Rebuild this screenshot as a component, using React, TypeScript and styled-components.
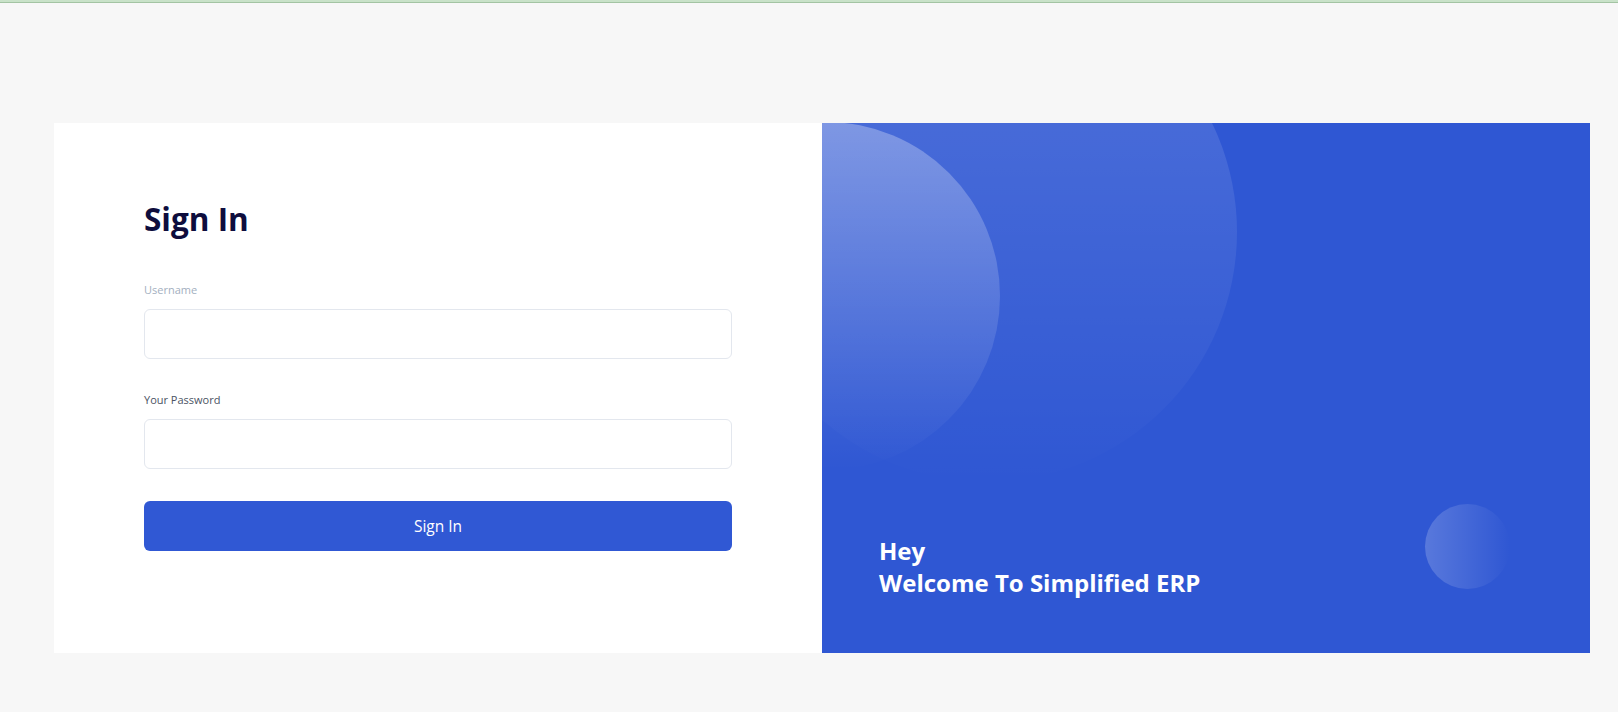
import React from "react";
import styled, { createGlobalStyle } from "styled-components";

const GlobalStyle = createGlobalStyle`
  * { box-sizing: border-box; }
  html, body { margin: 0; padding: 0; }
  body {
    background: #f7f7f7;
    font-family: "Open Sans", "Noto Sans", "Liberation Sans", sans-serif;
    -webkit-font-smoothing: antialiased;
  }
`;

const TopLine = styled.div`
  height: 3px;
  background: #c9e2c9;
  border-bottom: 1px solid #a3c4a3;
`;

const Page = styled.main`
  padding: 120px 28px 59px 54px;
`;

const Card = styled.section`
  display: grid;
  grid-template-columns: 768px 768px;
  height: 530px;
`;

const FormPanel = styled.div`
  background: #ffffff;
  padding: 77px 90px 0 90px;
  display: flex;
  flex-direction: column;
`;

const Title = styled.h1`
  margin: 0 0 44px 0;
  font-size: 31.5px;
  line-height: 38px;
  font-weight: 700;
  color: #0e0d3d;
`;

const Field = styled.div<{ $gap: number }>`
  display: flex;
  flex-direction: column;
  margin-bottom: ${(p) => p.$gap}px;
`;

const Label = styled.label<{ $muted?: boolean }>`
  font-size: 11px;
  line-height: 16px;
  color: ${(p) => (p.$muted ? "#a3afc0" : "#4a5363")};
  margin-bottom: 11px;
`;

const Input = styled.input`
  height: 50px;
  width: 100%;
  border: 1px solid #e3e7ee;
  border-radius: 6px;
  background: #fff;
  padding: 0 14px;
  font-size: 15px;
  font-family: inherit;
  outline: none;
`;

const Button = styled.button`
  height: 50px;
  width: 100%;
  border: none;
  border-radius: 6px;
  background: #3058d4;
  color: #ffffff;
  font-family: inherit;
  font-size: 15.5px;
  cursor: pointer;
`;

const BrandPanel = styled.div`
  position: relative;
  overflow: hidden;
  background: #2f57d3;
  display: flex;
  flex-direction: column;
  justify-content: flex-end;
  padding: 0 56px 54px 57px;
`;

const Circle = styled.div<{ $size: number; $left: number; $top: number; $bg: string }>`
  position: absolute;
  width: ${(p) => p.$size}px;
  height: ${(p) => p.$size}px;
  left: ${(p) => p.$left}px;
  top: ${(p) => p.$top}px;
  border-radius: 50%;
  background: ${(p) => p.$bg};
  pointer-events: none;
`;

const Greeting = styled.h2`
  position: relative;
  margin: 0;
  font-size: 24px;
  line-height: 32px;
  font-weight: 700;
  color: #ffffff;
`;

export default function App() {
  return (
    <>
      <GlobalStyle />
      <TopLine />
      <Page>
        <Card>
          <FormPanel>
            <Title>Sign In</Title>
            <Field $gap={33}>
              <Label $muted htmlFor="username">Username</Label>
              <Input id="username" type="text" />
            </Field>
            <Field $gap={32}>
              <Label htmlFor="password">Your Password</Label>
              <Input id="password" type="password" />
            </Field>
            <Button type="button">Sign In</Button>
          </FormPanel>
          <BrandPanel>
            <Circle
              $size={500}
              $left={-85}
              $top={-141}
              $bg="linear-gradient(180deg, rgba(255,255,255,0.16) 0%, rgba(255,255,255,0.0) 100%)"
            />
            <Circle
              $size={348}
              $left={-170}
              $top={-1}
              $bg="linear-gradient(180deg, rgba(255,255,255,0.3) 0%, rgba(255,255,255,0.0) 100%)"
            />
            <Circle
              $size={85}
              $left={603}
              $top={381}
              $bg="linear-gradient(90deg, rgba(255,255,255,0.2) 0%, rgba(255,255,255,0.0) 100%)"
            />
            <Greeting>
              Hey
              <br />
              Welcome To Simplified ERP
            </Greeting>
          </BrandPanel>
        </Card>
      </Page>
    </>
  );
}
